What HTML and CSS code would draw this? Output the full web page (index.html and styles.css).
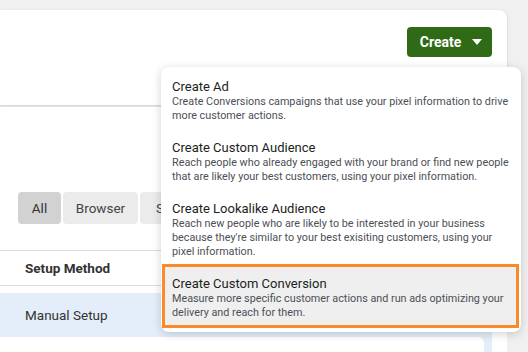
FILE: index.html
```html
<!DOCTYPE html>
<html lang="en">
<head>
  <meta charset="UTF-8">
  <title>Pixel Events</title>
  <link rel="stylesheet" href="styles.css">
</head>
<body>

  <div class="top-card">
    <button class="create-btn">Create <span class="caret"></span></button>
  </div>

  <div class="main-card">
    <div class="filters">
      <button class="filter active">All</button>
      <button class="filter">Browser</button>
      <button class="filter">Server</button>
    </div>

    <div class="table">
      <div class="table-head">Setup Method</div>
      <div class="table-body">
        <div class="table-row">Manual Setup</div>
        <div class="table-next"></div>
      </div>
    </div>
  </div>

  <!-- Create dropdown -->
  <div class="menu">
    <div class="menu-item">
      <div class="menu-title">Create Ad</div>
      <div class="menu-desc">Create Conversions campaigns that use your pixel information to drive more customer actions.</div>
    </div>
    <div class="menu-item">
      <div class="menu-title">Create Custom Audience</div>
      <div class="menu-desc">Reach people who already engaged with your brand or find new people that are likely your best customers, using your pixel information.</div>
    </div>
    <div class="menu-item">
      <div class="menu-title">Create Lookalike Audience</div>
      <div class="menu-desc">Reach new people who are likely to be interested in your business because they're similar to your best exisiting customers, using your pixel information.</div>
    </div>
    <div class="menu-item highlighted">
      <div class="menu-title">Create Custom Conversion</div>
      <div class="menu-desc">Measure more specific customer actions and run ads optimizing your delivery and reach for them.</div>
    </div>
  </div>

</body>
</html>
```

FILE: styles.css
```css
body {
  margin: 0;
  padding: 0;
  height: 352px;
  overflow: hidden;
  background-color: #f0f0f0; /* Page background */
  font-family: Roboto, "Liberation Sans", sans-serif;
  color: #1c1e21;
  position: relative; /* Anchor for the dropdown */
}

/* Header card */
.top-card {
  margin-top: 10px;
  width: 507px;
  height: 95px;
  box-sizing: border-box;
  padding: 17px 15px 0 0;
  background: #fff;
  border-radius: 0 8px 8px 0;
  box-shadow: 0 1px 3px rgba(0, 0, 0, 0.15);
  display: flex;
  justify-content: flex-end;
  align-items: flex-start;
}

.create-btn {
  height: 30px;
  width: 85px;
  border: none;
  border-radius: 4px;
  background: #2f6a17;
  color: #fff;
  font-family: inherit;
  font-size: 14px;
  font-weight: bold;
  display: flex;
  align-items: center;
  justify-content: center;
  gap: 11px;
  padding: 0 0 0 3px;
}

.caret {
  width: 0;
  height: 0;
  border-left: 5.5px solid transparent;
  border-right: 5.5px solid transparent;
  border-top: 6px solid #fff;
}

/* Lower card */
.main-card {
  margin-top: 2px;
  width: 507px;
  height: 245px;
  background: #fff;
  padding-top: 85px;
  box-sizing: border-box;
}

.filters {
  display: flex;
  gap: 2px;
  padding-left: 18px;
}

.filter {
  height: 32px;
  padding: 0 16px;
  border: none;
  border-radius: 4px;
  background: #ebebeb;
  color: #444;
  font-family: inherit;
  font-size: 13.5px;
}

.filter.active {
  width: 43px;
  background: #d2d2d2;
  color: #333;
  padding: 0;
}

.filter:nth-child(2) {
  width: 75px;
  padding: 0;
}

.table {
  margin-top: 26px;
  border-top: 1px solid #dcdcdc;
}

.table-head {
  height: 34px;
  line-height: 34px;
  padding-left: 25px;
  font-size: 13.5px;
  font-weight: bold;
  color: #333;
  border-bottom: 1px solid #dcdcdc;
}

.table-body {
  margin-top: 7px;
  width: 492px;
  background: #e3eefa;
}

.table-row {
  height: 44px;
  line-height: 44px;
  padding-left: 25px;
  font-size: 13.5px;
  color: #333;
}

.table-next {
  width: 484px;
  height: 20px;
  background: #fff;
  border-radius: 0 6px 0 0;
}

/* Dropdown menu */
.menu {
  position: absolute;
  top: 67px;
  left: 161px;
  width: 360px;
  padding: 3px 0 4px;
  background: #fff;
  border-radius: 8px;
  box-shadow: 0 2px 10px rgba(0, 0, 0, 0.18);
}

.menu-item {
  position: relative;
  padding: 9px 4px 8px 11px;
}

.menu-title {
  font-size: 13px;
  line-height: 16px;
  color: #1c1e21;
}

.menu-desc {
  font-size: 10.8px;
  line-height: 14px;
  color: #4b4f56;
}

.menu-item.highlighted {
  background: #efefef;
  margin: 0 5px 0 4px;
  padding-left: 7px;
}

/* Orange focus frame */
.menu-item.highlighted::after {
  content: '';
  position: absolute;
  top: -3px;
  left: -3px;
  right: -3px;
  bottom: 0;
  border: 3px solid #fb8a2b;
}
```
